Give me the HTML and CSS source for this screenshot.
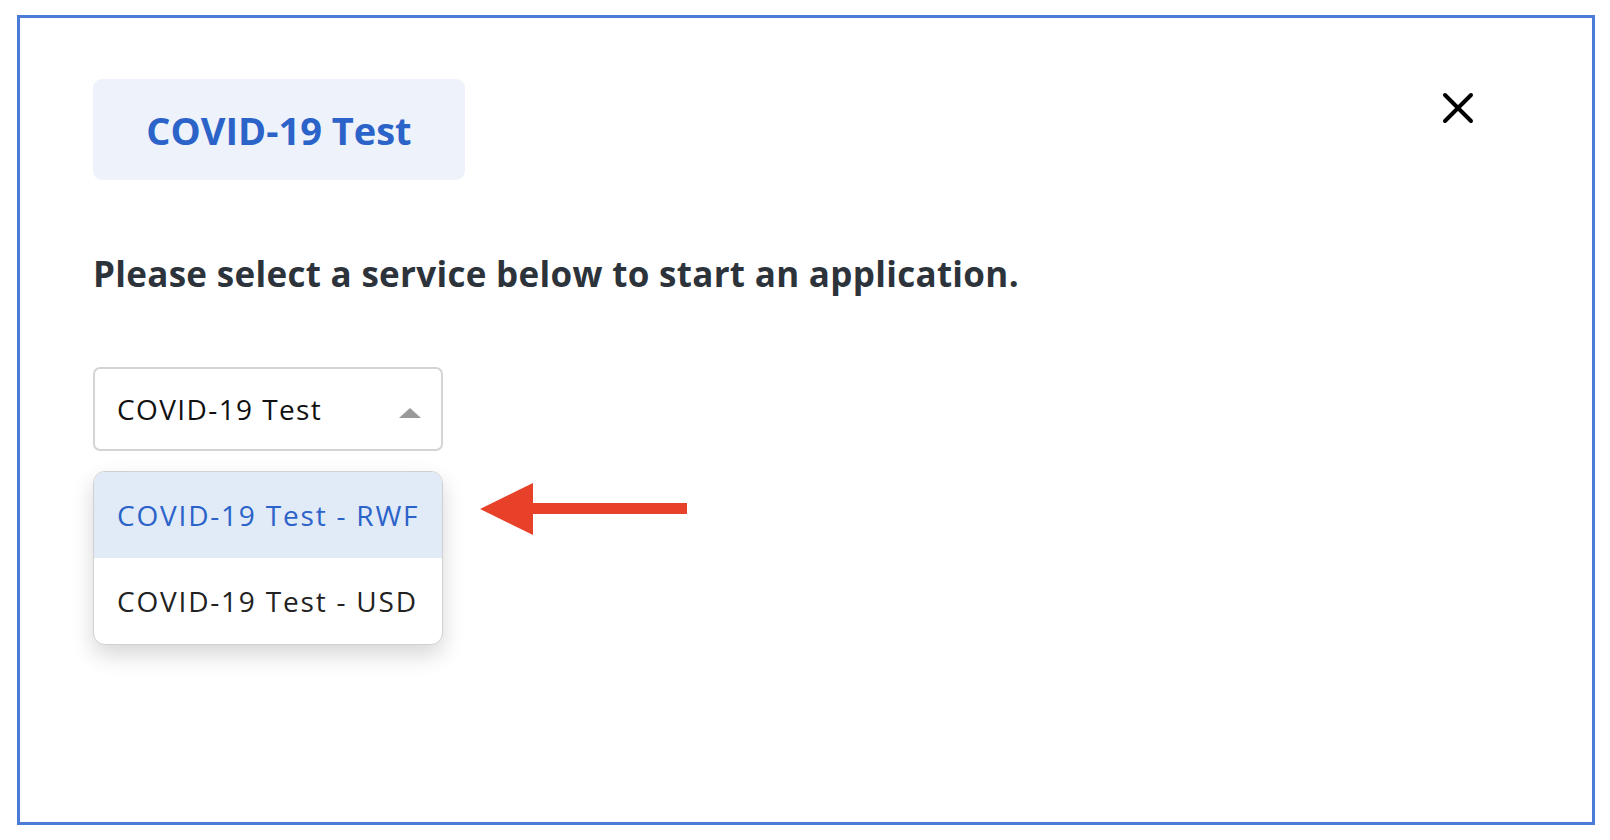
FILE: index.html
```html
<!DOCTYPE html>
<html lang="en">
<head>
<meta charset="utf-8">
<title>Select service</title>
<link rel="stylesheet" href="styles.css">
</head>
<body>
<div class="frame">
  <div class="header">
    <div class="badge">COVID-19 Test</div>
    <button class="close" aria-label="Close">
      <svg width="32" height="32" viewBox="0 0 32 32"><path d="M3 3 L29 29 M29 3 L3 29" stroke="#000" stroke-width="4" stroke-linecap="round" fill="none"/></svg>
    </button>
  </div>
  <h1 class="prompt">Please select a service below to start an application.</h1>
  <div class="select">
    <span class="select-value">COVID-19 Test</span>
    <span class="caret"></span>
  </div>
  <div class="menu-row">
    <ul class="menu">
      <li class="option active">COVID-19 Test - RWF</li>
      <li class="option">COVID-19 Test - USD</li>
    </ul>
    <svg class="arrow" width="208" height="54" viewBox="0 0 208 54"><polygon points="0,26 53,0 53,52" fill="#e8412a"/><rect x="50" y="20" width="157" height="11" fill="#e8412a"/></svg>
  </div>
</div>
</body>
</html>
```

FILE: styles.css
```css
* { box-sizing: border-box; }
html, body { margin: 0; padding: 0; background: #fff; }
body {
  font-family: "Open Sans", "Lato", sans-serif;
  width: 1610px;
  height: 840px;
  padding: 15px 0 0 17px;
}
.frame {
  width: 1578px;
  height: 810px;
  border: 3px solid #4a7bd6;
  padding: 61px 0 0 73px;
}
.header {
  display: flex;
  justify-content: space-between;
  align-items: flex-start;
  width: 1381px;
}
.badge {
  width: 372px;
  height: 101px;
  background: #edf2fb;
  border-radius: 9px;
  color: #2b63c9;
  font-weight: 700;
  font-size: 38px;
  display: flex;
  align-items: center;
  justify-content: center;
}
.close {
  background: none;
  border: 0;
  padding: 0;
  margin-top: 13px;
  width: 32px;
  height: 32px;
}
.close svg { display: block; }
.prompt {
  margin: 72px 0 0;
  font-size: 35px;
  letter-spacing: 0.3px;
  font-weight: 700;
  color: #2d333b;
  line-height: 44px;
}
.select {
  margin-top: 71px;
  width: 350px;
  height: 84px;
  border: 2px solid #d4d4d4;
  border-radius: 7px;
  display: flex;
  align-items: center;
  justify-content: space-between;
  padding: 0 20px 0 22px;
}
.select-value {
  font-size: 28px;
  letter-spacing: 1.4px;
  color: #111;
}
.caret {
  width: 0;
  height: 0;
  border-left: 11px solid transparent;
  border-right: 11px solid transparent;
  border-bottom: 10px solid #999;
  margin-top: 8px;
}
.menu-row {
  display: flex;
  align-items: flex-start;
  margin-top: 20px;
}
.menu {
  list-style: none;
  margin: 0;
  padding: 0;
  width: 350px;
  border: 1px solid #d0d0d0;
  border-radius: 12px;
  overflow: hidden;
  background: #fff;
  box-shadow: 0 10px 22px rgba(0,0,0,0.16);
}
.option {
  height: 86px;
  display: flex;
  align-items: center;
  padding-left: 23px;
  font-size: 28px;
  letter-spacing: 1.8px;
  color: #222;
}
.option.active {
  background: #e1eaf7;
  color: #2b63c9;
}
.arrow {
  display: block;
  margin: 12px 0 0 37px;
}
```
